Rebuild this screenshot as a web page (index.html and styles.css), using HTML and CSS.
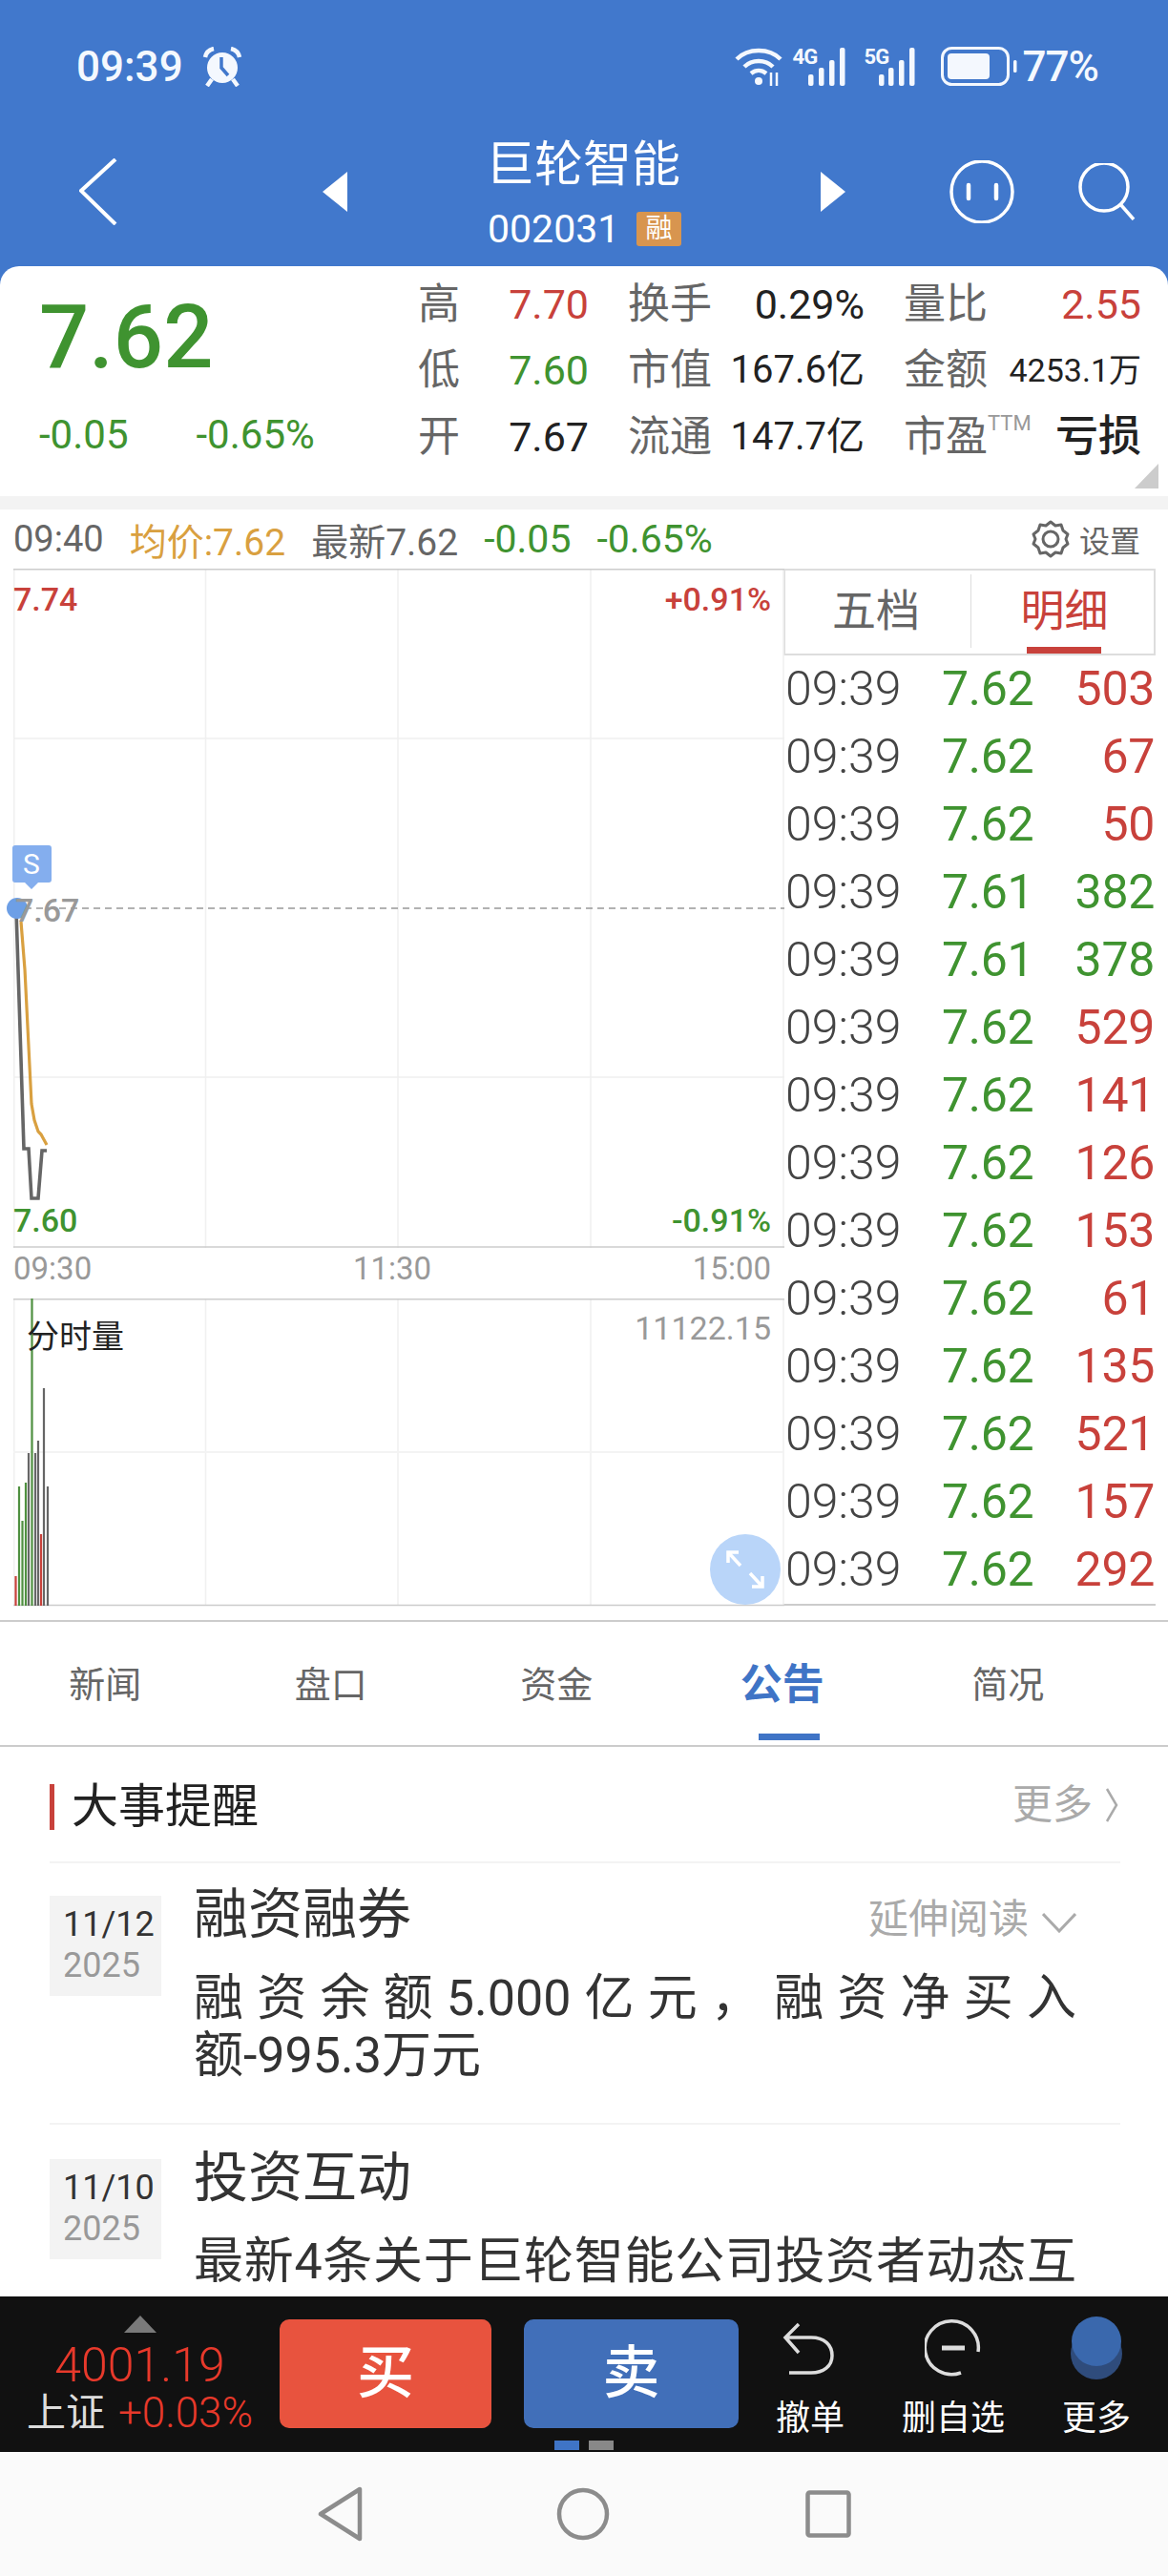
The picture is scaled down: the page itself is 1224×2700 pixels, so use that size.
FILE: index.html
```html
<!DOCTYPE html>
<html lang="zh-CN">
<head>
<meta charset="utf-8">
<title>巨轮智能</title>
<link rel="stylesheet" href="styles.css">
</head>
<body>
<div class="app">
  <header class="head">
    <div class="status">
      <span class="clock">09:39</span>
      <svg class="alarm" width="42" height="42" viewBox="0 0 42 42"><circle cx="21" cy="22" r="16" fill="#f4f8fe"/><path d="M20 11v11l7 8" fill="none" stroke="#4178cc" stroke-width="3.5"/><path d="M3 11c1-5 4-8 9-9M39 11c-1-5-4-8-9-9M10 34l-5 7M32 34l5 7" stroke="#f4f8fe" stroke-width="4.5" fill="none"/></svg>
      <div class="status-right">
        <svg width="50" height="40" viewBox="0 0 50 40"><g fill="none" stroke="#f4f8fe" stroke-width="4.5"><path d="M2 12C14 0 36 0 48 12"/><path d="M10 20c8-8 22-8 30 0"/><path d="M17 27c5-4 11-4 16 0"/></g><circle cx="25" cy="35" r="4" fill="#f4f8fe"/><path d="M38 26v14M44 40V26" stroke="#f4f8fe" stroke-width="2.5"/></svg>
        <span class="sig"><span class="net">4G</span><svg width="62" height="40" viewBox="0 0 62 40"><g fill="#f4f8fe"><rect x="16" y="28" width="5.5" height="12" rx="2"/><rect x="27" y="21" width="5.5" height="19" rx="2"/><rect x="38" y="13" width="5.5" height="27" rx="2"/><rect x="49" y="0" width="5.5" height="40" rx="2"/></g></svg></span>
        <span class="sig"><span class="net">5G</span><svg width="62" height="40" viewBox="0 0 62 40"><g fill="#f4f8fe"><rect x="15" y="28" width="5.5" height="12" rx="2"/><rect x="25" y="21" width="5.5" height="19" rx="2"/><rect x="36" y="13" width="5.5" height="27" rx="2"/><rect x="47" y="0" width="5.5" height="40" rx="2"/></g></svg></span>
        <svg class="batt" width="80" height="42" viewBox="0 0 80 42"><rect x="1.5" y="1.5" width="69" height="38" rx="10" fill="none" stroke="#f4f8fe" stroke-width="3"/><rect x="7" y="7" width="44" height="27" rx="4" fill="#f4f8fe"/><rect x="76" y="14" width="3.5" height="13" rx="1.5" fill="#f4f8fe"/></svg>
        <span class="pct">77%</span>
      </div>
    </div>
    <div class="navrow">
      <svg class="back" width="40" height="70" viewBox="0 0 40 70"><path d="M38 1 2 34l36 35" fill="none" stroke="#fff" stroke-width="4"/></svg>
      <svg class="tri-l" width="26" height="42" viewBox="0 0 26 42"><path d="M26 0v42L0 21z" fill="#fff"/></svg>
      <div class="titleblock">
        <div class="title">巨轮智能</div>
        <div class="coderow"><span class="code">002031</span><span class="badge">融</span></div>
      </div>
      <svg class="tri-r" width="26" height="42" viewBox="0 0 26 42"><path d="M0 0v42l26-21z" fill="#fff"/></svg>
      <svg class="face" width="72" height="66" viewBox="0 0 72 66"><circle cx="36" cy="33" r="32" fill="none" stroke="#fff" stroke-width="3.5"/><path d="M22 26v14M51 26v14" stroke="#fff" stroke-width="4.5" stroke-linecap="round"/></svg>
      <svg class="search" width="60" height="60" viewBox="0 0 60 60"><circle cx="27" cy="25" r="25" fill="none" stroke="#fff" stroke-width="3.5"/><path d="M44 43l14 16" stroke="#fff" stroke-width="3.5"/></svg>
    </div>
  </header>

  <section class="quote">
    <div class="quote-left">
      <div class="price">7.62</div>
      <div class="changes"><span>-0.05</span><span>-0.65%</span></div>
    </div>
    <div class="quote-grid">
      <div class="cell"><span class="lab">高</span><span class="val red">7.70</span></div>
      <div class="cell"><span class="lab">换手</span><span class="val dark">0.29%</span></div>
      <div class="cell"><span class="lab">量比</span><span class="val red">2.55</span></div>
      <div class="cell"><span class="lab">低</span><span class="val green">7.60</span></div>
      <div class="cell"><span class="lab">市值</span><span class="val dark cap">167.6亿</span></div>
      <div class="cell"><span class="lab">金额</span><span class="val dark small">4253.1万</span></div>
      <div class="cell"><span class="lab">开</span><span class="val dark">7.67</span></div>
      <div class="cell"><span class="lab">流通</span><span class="val dark cap">147.7亿</span></div>
      <div class="cell"><span class="lab">市盈<sup class="ttm">TTM</sup></span><span class="val dark loss">亏损</span></div>
    </div>
    <div class="corner"></div>
  </section>
  <div class="gap"></div>

  <div class="infoline">
    <span class="t-grey">09:40</span>
    <span class="t-orange">均价:7.62</span>
    <span class="t-grey t-wide">最新7.62</span>
    <span class="t-green">-0.05</span>
    <span class="t-green">-0.65%</span>
    <span class="setting">
      <svg width="40" height="40" viewBox="0 0 40 40"><path d="M20 2l5 4 6-1 2 6 5 4-2 5 2 5-5 4-2 6-6-1-5 4-5-4-6 1-2-6-5-4 2-5-2-5 5-4 2-6 6 1z" fill="none" stroke="#666" stroke-width="3" stroke-linejoin="round"/><circle cx="20" cy="20" r="8" fill="none" stroke="#666" stroke-width="3"/></svg>
      <span>设置</span>
    </span>
  </div>

  <div class="market">
    <div class="charts">
      <div class="pricechart">
        <svg class="plot" width="808" height="712" viewBox="0 0 808 712">
          <g stroke="#f0f0f0" stroke-width="1.5">
            <path d="M.75 0v712M201.5 0v712M403 0v712M605 0v712M807 0v712"/>
            <path d="M0 178h808M0 533h808"/>
          </g>
          <path d="M0 .75h808" stroke="#ccc" stroke-width="1.5"/>
          <path d="M0 711h808" stroke="#ccc" stroke-width="1.5"/>
          <path d="M0 356h808" stroke="#999" stroke-width="1.5" stroke-dasharray="7 5"/>
          <path d="M8 370 12 420 19 561 22 578 26 590 29 593 35 604" fill="none" stroke="#d9a040" stroke-width="3.2"/>
          <path d="M3 358 11 608h5l3 52h7l4-50h5" fill="none" stroke="#666" stroke-width="3.6"/>
          <circle cx="4" cy="356" r="11" fill="#6d9fe6"/>
          <path d="M2 290h35a3 3 0 0 1 3 3v33a3 3 0 0 1-3 3H26l-7 7-7-7H2a3 3 0 0 1-3-3V293a3 3 0 0 1 3-3z" fill="#84aeee"/>
        </svg>
        <span class="flag">S</span>
        <span class="pl p-tl red">7.74</span>
        <span class="pl p-tr red">+0.91%</span>
        <span class="pl p-mid">7.67</span>
        <span class="pl p-bl green">7.60</span>
        <span class="pl p-br green">-0.91%</span>
      </div>
      <div class="timeaxis"><span>09:30</span><span>11:30</span><span>15:00</span></div>
      <div class="volchart">
        <svg class="plot" width="808" height="323" viewBox="0 0 808 323">
          <g stroke="#f0f0f0" stroke-width="1.5">
            <path d="M.75 0v322M201.5 0v322M403 0v322M605 0v322M807 0v322"/>
            <path d="M0 161h808" stroke="#f3f3f3" stroke-width="2"/>
          </g>
          <path d="M0 .75h808M0 321.5h808" stroke="#ccc" stroke-width="1.5"/>
          <g stroke-width="2.2">
            <path d="M2.5 291v31" stroke="#c8413b"/>
            <path d="M6 197v125M9.5 233v89M13 193v129M19.5 0v322" stroke="#4f9040"/>
            <path d="M16 162v160M23 162v160M26 149v173M32 94v228M36 197v125" stroke="#666"/>
            <path d="M29 247v75" stroke="#c8413b"/>
          </g>
        </svg>
        <span class="volname">分时量</span>
        <span class="volmax">11122.15</span>
        <span class="expand"><svg width="74" height="74" viewBox="0 0 74 74"><circle cx="37" cy="37" r="37" fill="#b9d5f9"/><path d="M19 30V19h11M19 19l13 14M55 44v11H44M55 55 42 41" fill="none" stroke="#fff" stroke-width="3.5"/></svg></span>
      </div>
    </div>
    <div class="trades">
      <div class="tradetabs">
        <div class="ttab">五档</div>
        <div class="ttab on">明细</div>
      </div>
      <div class="tr"><span>09:39</span><span class="green">7.62</span><span class="red">503</span></div>
      <div class="tr"><span>09:39</span><span class="green">7.62</span><span class="red">67</span></div>
      <div class="tr"><span>09:39</span><span class="green">7.62</span><span class="red">50</span></div>
      <div class="tr"><span>09:39</span><span class="green">7.61</span><span class="green">382</span></div>
      <div class="tr"><span>09:39</span><span class="green">7.61</span><span class="green">378</span></div>
      <div class="tr"><span>09:39</span><span class="green">7.62</span><span class="red">529</span></div>
      <div class="tr"><span>09:39</span><span class="green">7.62</span><span class="red">141</span></div>
      <div class="tr"><span>09:39</span><span class="green">7.62</span><span class="red">126</span></div>
      <div class="tr"><span>09:39</span><span class="green">7.62</span><span class="red">153</span></div>
      <div class="tr"><span>09:39</span><span class="green">7.62</span><span class="red">61</span></div>
      <div class="tr"><span>09:39</span><span class="green">7.62</span><span class="red">135</span></div>
      <div class="tr"><span>09:39</span><span class="green">7.62</span><span class="red">521</span></div>
      <div class="tr"><span>09:39</span><span class="green">7.62</span><span class="red">157</span></div>
      <div class="tr"><span>09:39</span><span class="green">7.62</span><span class="red">292</span></div>
    </div>
  </div>

  <main class="scroll">
    <nav class="tabs">
      <div class="tab">新闻</div>
      <div class="tab">盘口</div>
      <div class="tab">资金</div>
      <div class="tab active">公告<i class="bar"></i></div>
      <div class="tab">简况</div>
    </nav>
    <div class="feed">
      <div class="feedhead">
        <h2 class="feedtitle">大事提醒</h2>
        <span class="more">更多<svg width="14" height="36" viewBox="0 0 14 36"><path d="M2 1l10 17L2 35" fill="none" stroke="#aaa" stroke-width="2.5"/></svg></span>
      </div>
      <article class="item">
        <div class="date"><div>11/12</div><div class="yr">2025</div></div>
        <div class="itembody">
          <div class="itemhead"><span class="itemtitle">融资融券</span><span class="extend">延伸阅读<svg width="36" height="22" viewBox="0 0 36 22"><path d="M1 2l17 18L35 2" fill="none" stroke="#aaa" stroke-width="3"/></svg></span></div>
          <p class="itemtext">融资余额5.000亿元，融资净买入<span class="nb">额-995.3万元</span></p>
        </div>
      </article>
      <article class="item">
        <div class="date"><div>11/10</div><div class="yr">2025</div></div>
        <div class="itembody">
          <div class="itemhead"><span class="itemtitle">投资互动</span></div>
          <p class="itemtext fill">最新4条关于巨轮智能公司投资者动态互</p>
        </div>
      </article>
    </div>
  </main>

  <footer class="actionbar">
    <div class="index">
      <svg width="34" height="18" viewBox="0 0 34 18"><path d="M17 0l17 18H0z" fill="#7a7a7a"/></svg>
      <div class="indexval">4001.19</div>
      <div class="indexrow"><span class="indexname">上证</span><span class="indexpct">+0.03%</span></div>
    </div>
    <button class="trade buy">买</button>
    <button class="trade sell">卖</button>
    <div class="tool">
      <svg width="60" height="56" viewBox="0 0 60 56"><path d="M18 3 4 17l14 16M5 17h26c14 0 22 8 22 19s-9 18-22 18H8" fill="none" stroke="#ddd" stroke-width="3.5"/></svg>
      <span>撤单</span>
    </div>
    <div class="tool">
      <svg width="60" height="60" viewBox="0 0 60 60"><path d="M38 56A28 28 0 1 1 56 34" fill="none" stroke="#ddd" stroke-width="3.5"/><path d="M18 30h24" stroke="#ddd" stroke-width="5"/></svg>
      <span>删自选</span>
    </div>
    <div class="tool">
      <svg width="60" height="68" viewBox="0 0 60 68"><circle cx="30" cy="40" r="27" fill="#2f4c7c"/><circle cx="30" cy="27" r="26" fill="#3a68ad"/></svg>
      <span>更多</span>
    </div>
    <div class="dots"><i class="dot on"></i><i class="dot"></i></div>
  </footer>

  <div class="sysnav">
    <svg width="48" height="58" viewBox="0 0 48 58"><path d="M44 3v52L3 29z" fill="none" stroke="#8c8c8c" stroke-width="4.5" stroke-linejoin="round"/></svg>
    <svg width="56" height="56" viewBox="0 0 56 56"><circle cx="28" cy="28" r="25" fill="none" stroke="#8c8c8c" stroke-width="4.5"/></svg>
    <svg width="48" height="50" viewBox="0 0 48 50"><rect x="2.5" y="2.5" width="43" height="45" rx="2" fill="none" stroke="#8c8c8c" stroke-width="4.5"/></svg>
  </div>
</div>
</body>
</html>
```
FILE: styles.css
```css
* { box-sizing: border-box; }
html, body { margin: 0; padding: 0; background: #fff; }
body { font-family: Roboto, "Noto Sans CJK SC", sans-serif; color: #333; }
.app { width: 1224px; height: 2700px; display: flex; flex-direction: column; overflow: hidden; }
.red { color: #c8413b; }
.green { color: #3f9330; }
.dark { color: #222; }

.head { height: 300px; background: #4178cc; color: #fff; flex: none; }
.status { height: 140px; display: flex; align-items: center; padding: 0 73px 0 80px; }
.clock { font-size: 44px; font-weight: 500; color: #f4f8fe; line-height: 50px; }
.alarm { margin-left: 20px; }
.status-right { margin-left: auto; display: flex; align-items: center; }
.sig { margin-left: 11px; position: relative; display: block; width: 62px; height: 40px; }
.sig + .sig { margin-left: 13px; }
.sig svg { display: block; }
.net { position: absolute; left: 0; top: -3px; font-size: 22px; font-weight: 700; line-height: 26px; color: #f4f8fe; letter-spacing: -1px; }
.batt { margin-left: 18px; }
.pct { font-size: 44px; font-weight: 500; color: #f4f8fe; margin-left: 6px; line-height: 50px; letter-spacing: -1px; }

.navrow { height: 139px; padding: 0 0 17px 83px; display: flex; align-items: center; }
.tri-l { margin-left: 215px; }
.titleblock { margin-left: 147px; width: 203px; }
.title { font-size: 51px; line-height: 60px; white-space: nowrap; margin: 3px 0 -3px -2px; }
.coderow { margin-top: 18px; height: 44px; display: flex; align-items: center; justify-content: space-between; }
.code { font-size: 41px; line-height: 44px; }
.badge { width: 47px; height: 36px; border-radius: 3px; background: #d8954f; color: #fff; font-size: 28px; line-height: 36px; text-align: center; }
.tri-r { margin-left: 146px; }
.face { margin-left: 107px; }
.search { margin-left: 65px; }

.quote { flex: none; height: 241px; margin-top: -21px; position: relative; background: #fff; border-radius: 20px 20px 0 0; display: flex; }
.quote-left { width: 438px; padding: 27px 0 0 41px; }
.price { font-size: 92px; font-weight: 500; line-height: 96px; color: #3f9330; }
.changes { margin-top: 31px; display: flex; gap: 71px; font-size: 42px; line-height: 46px; color: #3f9330; }
.quote-grid { padding-top: 5px; display: grid; grid-template-columns: 179px 248px 249px; column-gap: 41px; grid-auto-rows: 69.5px; }
.cell { display: flex; justify-content: space-between; align-items: center; }
.lab { font-size: 44px; color: #666; line-height: 60px; white-space: nowrap; position: relative; }
.val { font-size: 43px; line-height: 60px; white-space: nowrap; }
.val.cap { font-size: 40px; }
.val.small { font-size: 34px; }
.val.loss { font-size: 45px; font-weight: 500; }
.ttm { font-size: 22px; color: #999; position: absolute; left: 88px; top: 1px; line-height: 30px; }
.corner { position: absolute; right: 10px; bottom: 8px; width: 0; height: 0; border-style: solid; border-width: 0 0 26px 25px; border-color: transparent transparent #ccc transparent; }
.gap { flex: none; height: 14px; background: #f3f3f3; }

.infoline { flex: none; height: 62px; padding: 0 29px 0 14px; display: flex; align-items: center; font-size: 38px; }
.infoline > span { margin-right: 27px; }
.t-grey { color: #666; }
.t-wide { font-size: 39px; }
.t-orange { color: #d9a040; font-size: 39px; }
.t-green { color: #3f9330; font-size: 41px; }
.infoline > .setting { margin: 0 0 0 auto; display: flex; align-items: center; gap: 10px; font-size: 32px; color: #666; }

.market { flex: none; height: 1104px; display: flex; padding-left: 14px; border-bottom: 2px solid #ccc; }
.charts { width: 808px; flex: none; }
.pricechart { height: 712px; position: relative; }
.plot { display: block; overflow: visible; }
.pl { position: absolute; font-size: 34px; font-weight: 500; line-height: 40px; }
.p-tl { left: 0; top: 12px; }
.p-tr { right: 14px; top: 12px; }
.p-bl { left: 0; bottom: 9px; }
.p-br { right: 14px; bottom: 9px; }
.pl.p-mid { left: 2px; top: 338px; color: #999; }
.flag { position: absolute; left: -1px; top: 290px; width: 40px; height: 40px; text-align: center; color: #fff; font-size: 30px; line-height: 40px; }
.timeaxis { height: 41px; margin-bottom: 12px; display: flex; justify-content: space-between; padding-right: 14px; font-size: 33px; line-height: 44px; color: #999; }
.volchart { height: 323px; position: relative; }
.volname { position: absolute; left: 14px; top: 18px; font-size: 34px; line-height: 44px; color: #222; }
.volmax { position: absolute; right: 14px; top: 9px; font-size: 34px; line-height: 44px; color: #999; }
.expand { position: absolute; right: 4px; top: 247px; width: 74px; height: 74px; }
.expand svg { display: block; }

.trades { width: 390px; margin-left: -1px; flex: none; height: 1087px; border-bottom: 2px solid #ccc; }
.tradetabs { height: 91px; border: 2px solid #ddd; display: grid; grid-template-columns: 195px 195px; }
.ttab { font-size: 46px; line-height: 56px; color: #666; text-align: center; padding-top: 14px; position: relative; }
.ttab:first-child { padding-right: 5px; }
.ttab.on { color: #c8413b; }
.ttab.on::before { content: ""; position: absolute; left: -1px; top: 4px; bottom: 6px; width: 1px; background: #ddd; }
.ttab.on::after { content: ""; position: absolute; left: 58px; bottom: 0; width: 78px; height: 7px; background: #c8413b; }
.tr { display: grid; grid-template-columns: 164px 100px 1fr; padding: 0 1px 0 2px; height: 71px; font-size: 50px; line-height: 71px; color: #444; }
.tr span { letter-spacing: -.3px; }
.tr span:first-child { font-weight: 300; letter-spacing: 0; }
.tr span:last-child { text-align: right; }

.scroll { flex: 1; min-height: 0; overflow: hidden; background: #fff; }
.tabs { height: 131px; margin-left: -8px; display: grid; grid-template-columns: repeat(5, 236.5px); border-bottom: 2px solid #ccc; width: 1232px; }
.tab { padding-top: 38px; font-size: 38px; line-height: 56px; color: #666; display: flex; flex-direction: column; align-items: center; }
.tab.active { color: #3f74c6; font-size: 44px; font-weight: 700; }
.bar { display: block; width: 64px; height: 7px; background: #3f74c6; margin: 23px 0 0 14px; }
.feed { padding: 0 50px 0 52px; }
.feedhead { height: 120px; display: flex; align-items: center; justify-content: space-between; }
.feedtitle { margin: 6px 0 0; font-size: 49px; font-weight: 400; line-height: 48px; color: #222; border-left: 5px solid #c8413b; padding-left: 18px; }
.more { font-size: 42px; line-height: 50px; color: #aaa; display: flex; align-items: center; gap: 13px; padding-right: 2px; margin-top: 2px; }
.item { display: flex; border-top: 2px solid #f3f3f3; height: 274px; padding-top: 26px; }
.item + .item { padding-top: 28px; }
.date { margin-top: 8px; width: 117px; height: 105px; flex: none; background: #f3f3f3; padding: 9px 0 0 14px; font-size: 36px; line-height: 43px; color: #333; }
.yr { color: #999; }
.itembody { margin-left: 34px; width: 925px; }
.itemhead { height: 56px; display: flex; justify-content: space-between; align-items: center; }
.itemtitle { font-size: 57px; line-height: 56px; color: #333; white-space: nowrap; }
.extend { font-size: 42px; line-height: 50px; color: #aaa; display: flex; align-items: center; gap: 14px; padding-top: 10px; }
.extend svg { margin-top: 6px; }
.itemtext { margin: 30px 0 0; font-size: 52px; line-height: 60px; color: #333; text-align: justify; }
.itemtext.fill { text-align-last: justify; }
.nb { white-space: nowrap; }

.actionbar { flex: none; height: 163px; background: #111; display: flex; position: relative; }
.index { width: 293px; flex: none; display: flex; flex-direction: column; align-items: center; padding-top: 20px; }
.index svg { display: block; }
.indexval { font-size: 50px; font-weight: 300; line-height: 52px; color: #e8392b; margin-top: 8px; }
.indexrow { display: flex; gap: 14px; line-height: 50px; margin-top: -1px; white-space: nowrap; }
.indexname { font-size: 41px; color: #ddd; }
.indexpct { font-size: 44px; font-weight: 300; color: #e8392b; }
.trade { margin-top: 24px; height: 114px; border: 0; padding: 0; border-radius: 10px; color: #fff; font-family: inherit; font-size: 60px; font-weight: 500; line-height: 114px; }
.buy { width: 222px; background: #e8533e; }
.sell { width: 225px; margin-left: 34px; background: #416fb9; }
.tool { width: 150px; flex: none; height: 163px; display: flex; flex-direction: column; align-items: center; color: #fff; font-size: 36px; position: relative; padding-top: 20px; }
.tool svg { display: block; height: 68px; }
.tool span { position: absolute; left: 0; right: 0; top: 105px; text-align: center; line-height: 46px; }
.dots { position: absolute; left: 581px; top: 151px; display: flex; gap: 10px; }
.dot { display: block; width: 26px; height: 10px; background: #888; }
.dot.on { background: #3f74c6; }
.sysnav { flex: none; height: 130px; background: #fafafa; display: flex; align-items: center; padding-left: 333px; }
.sysnav svg:nth-child(2) { margin-left: 202px; }
.sysnav svg:nth-child(3) { margin-left: 205px; }
```
